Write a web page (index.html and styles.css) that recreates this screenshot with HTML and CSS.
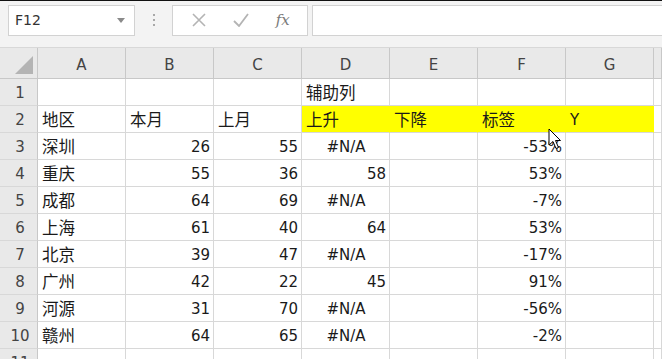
FILE: index.html
```html
<!DOCTYPE html>
<html lang="zh-CN">
<head>
    <meta charset="UTF-8">
    <meta name="viewport" content="width=device-width, initial-scale=1.0">
    <title>Sheet1</title>
    <link rel="stylesheet" href="styles.css">
</head>
<body>

<div class="formula-bar">
    <div class="name-box">
        <span>F12</span>
        <svg class="name-arrow" width="8" height="5" viewBox="0 0 8 5"><path d="M0 0H8L4 5Z" fill="#8a8a8a"/></svg>
    </div>
    <div class="grip">
        <span></span><span></span><span></span>
    </div>
    <div class="fx-buttons">
        <svg width="14" height="14" viewBox="0 0 14 14"><path d="M1 1L13 13M13 1L1 13" stroke="#b4b4b4" stroke-width="1.6" fill="none"/></svg>
        <svg width="16" height="14" viewBox="0 0 16 14"><path d="M1 8L6 13L15 1" stroke="#b4b4b4" stroke-width="1.8" fill="none"/></svg>
        <span class="fx">fx</span>
    </div>
    <div class="formula-input"></div>
</div>

<div class="sheet" id="sheet"></div>

<svg class="cursor" width="14" height="22" viewBox="0 0 14 22">
    <path d="M1 1V17L5 13.5L8 20.5L10.5 19.5L7.5 12.5H12.5Z" fill="#fff" stroke="#000" stroke-width="1" stroke-linejoin="round"/>
</svg>

<script>
    const columns = ["A", "B", "C", "D", "E", "F", "G", ""];
    const rows = [
        ["", "", "", "辅助列", "", "", ""],
        ["地区", "本月", "上月", "上升", "下降", "标签", "Y"],
        ["深圳", 26, 55, "#N/A", "", "-53%", ""],
        ["重庆", 55, 36, 58, "", "53%", ""],
        ["成都", 64, 69, "#N/A", "", "-7%", ""],
        ["上海", 61, 40, 64, "", "53%", ""],
        ["北京", 39, 47, "#N/A", "", "-17%", ""],
        ["广州", 42, 22, 45, "", "91%", ""],
        ["河源", 31, 70, "#N/A", "", "-56%", ""],
        ["赣州", 64, 65, "#N/A", "", "-2%", ""],
        ["", "", "", "", "", "", ""]
    ];

    function buildSheet() {
        const sheet = document.getElementById("sheet");
        let html = '<div class="corner"><span class="corner-mark"></span></div>';
        columns.forEach(col => {
            html += `<div class="col-head">${col}</div>`;
        });

        rows.forEach((row, r) => {
            html += `<div class="row-head">${r + 1}</div>`;
            row.concat([""]).forEach((value, c) => {
                const classes = ["cell"];
                const text = String(value);
                if (typeof value === "number" || /%$/.test(text)) classes.push("num");
                if (text === "#N/A") classes.push("err");
                if (/[\u4e00-\u9fff]/.test(text)) classes.push("cjk");
                if (r === 1 && c >= 3 && c <= 6) classes.push("fill");
                html += `<div class="${classes.join(" ")}">${text}</div>`;
            });
        });
        sheet.innerHTML = html;
    }

    buildSheet();
</script>

</body>
</html>
```

FILE: styles.css
```css
body {
    margin: 0;
    font-family: "DejaVu Sans", "Noto Sans CJK SC", sans-serif;
    font-size: 15px;
    color: #1a1a1a;
    background: #fff;
    overflow: hidden;
}
.formula-bar {
    display: flex;
    align-items: center;
    height: 47px;
    padding-left: 8px;
    border-top: 1px solid #111;
    background: #f3f3f3;
    box-sizing: border-box;
}
.name-box {
    display: flex;
    align-items: center;
    justify-content: space-between;
    width: 127px;
    height: 31px;
    padding: 0 9px 0 6px;
    margin-top: -8px;
    background: #fff;
    border: 1px solid #d2d2d2;
    box-sizing: border-box;
    font-size: 14px;
    color: #333;
}
.grip {
    display: flex;
    flex-direction: column;
    gap: 3px;
    width: 37px;
    align-items: center;
    margin-top: -8px;
}
.grip span {
    width: 2px;
    height: 2px;
    background: #a8a8a8;
}
.fx-buttons {
    display: flex;
    align-items: center;
    justify-content: space-around;
    width: 136px;
    height: 31px;
    padding: 0 4px 0 6px;
    margin-top: -8px;
    background: #fff;
    border: 1px solid #d2d2d2;
    box-sizing: border-box;
}
.fx {
    font-family: "DejaVu Serif", serif;
    font-style: italic;
    font-size: 15px;
    color: #7a7a7a;
}
.formula-input {
    flex: 1;
    height: 31px;
    margin-left: 4px;
    margin-top: -8px;
    background: #fff;
    border: 1px solid #d2d2d2;
    border-right: none;
    box-sizing: border-box;
}
.sheet {
    display: grid;
    grid-template-columns: 38px repeat(7, 88px) 1fr;
    grid-auto-rows: 27px;
    grid-template-rows: 31px;
    border-top: 1px solid #d8d8d8;
}
.corner, .col-head, .row-head {
    background: #e9e9e9;
    color: #444;
    box-sizing: border-box;
}
.corner {
    position: relative;
    border-right: 1px solid #c8c8c8;
    border-bottom: 1px solid #c8c8c8;
}
.corner-mark {
    position: absolute;
    right: 4px;
    bottom: 4px;
    width: 0;
    height: 0;
    border-left: 18px solid transparent;
    border-bottom: 18px solid #b4b4b4;
}
.col-head {
    text-align: center;
    line-height: 31px;
    padding-top: 2px;
    border-right: 1px solid #c8c8c8;
    border-bottom: 1px solid #c8c8c8;
}
.row-head {
    text-align: center;
    line-height: 27px;
    padding: 1px 0 0 3px;
    border-right: 1px solid #c8c8c8;
    border-bottom: 1px solid #d8d8d8;
}
.cell {
    line-height: 27px;
    padding: 1px 3px 0 4px;
    border-right: 1px solid #d8d8d8;
    border-bottom: 1px solid #d8d8d8;
    box-sizing: border-box;
    white-space: nowrap;
    overflow: visible;
}
.cell.num {
    text-align: right;
}
.cell.err {
    text-align: center;
}
.cell.cjk {
    font-size: 16.5px;
}
.cell.fill {
    background: #ffff00;
    border-right-color: #ffff00;
}
.cursor {
    position: absolute;
    left: 548px;
    top: 128px;
}
```
